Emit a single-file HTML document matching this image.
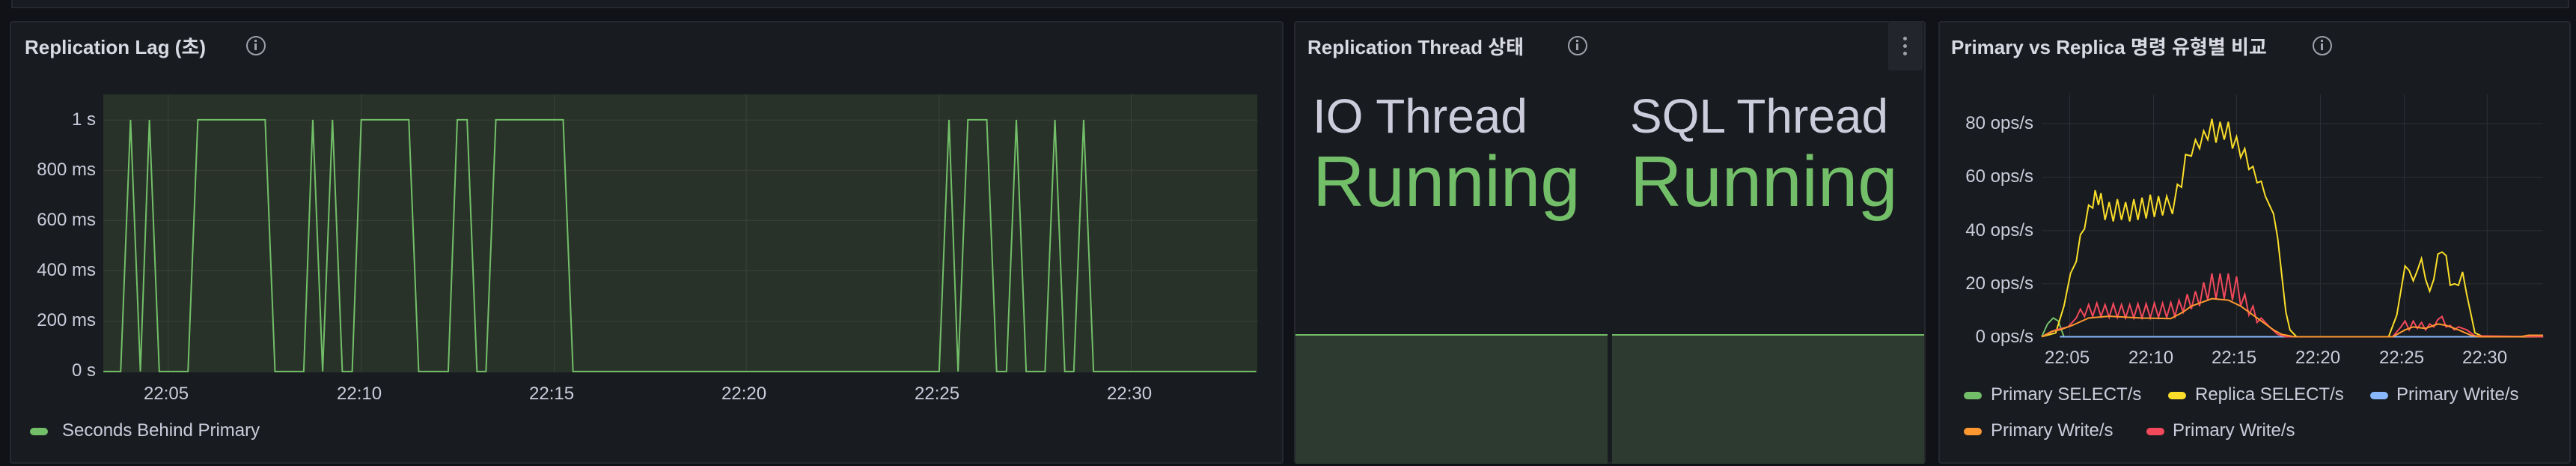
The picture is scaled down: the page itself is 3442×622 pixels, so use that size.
<!DOCTYPE html>
<html><head><meta charset="utf-8"><style>
*{margin:0;padding:0;box-sizing:border-box}
body{width:3442px;height:622px;background:#111217;position:relative;overflow:hidden;font-family:"Liberation Sans","Noto Sans CJK KR",sans-serif;color:#ccccdc}
.abs{position:absolute}
.panel{position:absolute;background:#181b1f;border:2px solid #25282e;border-radius:4px}
.title{position:absolute;font-size:26px;font-weight:bold;color:#d8d9e3;white-space:nowrap}
.info{position:absolute;width:26px;height:26px;border:2.5px solid #9fa0ab;border-radius:50%;}
.info:after{content:"";position:absolute;left:9px;top:8px;width:3px;height:9px;background:#9fa0ab}
.info:before{content:"";position:absolute;left:9px;top:3px;width:3px;height:3px;background:#9fa0ab}
.lbl{position:absolute;font-size:24px;color:#ccccdc;white-space:nowrap}
.r{text-align:right}
.sw{position:absolute;width:24px;height:10px;border-radius:5px}
</style></head><body>
<div class="abs" style="left:15px;top:-4px;width:3418px;height:15px;background:#181b1f;border:2px solid #25282e;border-top:none"></div>

<!-- Panel 1 -->
<div class="panel" style="left:13px;top:28px;width:1702px;height:591px"></div>
<div class="title" style="left:33px;top:43px">Replication Lag (초)</div>
<div class="info" style="left:329px;top:48px"></div>
<div class="abs" style="left:138px;top:126px;width:1542px;height:371px;background:#283228"></div>
<div class="lbl r" style="left:20px;width:108px;top:146px">1 s</div>
<div class="lbl r" style="left:20px;width:108px;top:213px">800 ms</div>
<div class="lbl r" style="left:20px;width:108px;top:280px">600 ms</div>
<div class="lbl r" style="left:20px;width:108px;top:347px">400 ms</div>
<div class="lbl r" style="left:20px;width:108px;top:414px">200 ms</div>
<div class="lbl r" style="left:20px;width:108px;top:481px">0 s</div>
<div class="lbl" style="left:192px;top:512px">22:05</div>
<div class="lbl" style="left:450px;top:512px">22:10</div>
<div class="lbl" style="left:707px;top:512px">22:15</div>
<div class="lbl" style="left:964px;top:512px">22:20</div>
<div class="lbl" style="left:1222px;top:512px">22:25</div>
<div class="lbl" style="left:1479px;top:512px">22:30</div>
<div class="sw" style="left:40px;top:571px;background:#73bf69"></div>
<div class="lbl" style="left:83px;top:561px">Seconds Behind Primary</div>
<svg class="abs" style="left:0;top:0" width="1720" height="622" viewBox="0 0 1568 1568" preserveAspectRatio="none">
<g stroke="#3a4339" stroke-width="1">
<line x1="126" x2="1532" y1="404" y2="404" vector-effect="non-scaling-stroke"/><line x1="126" x2="1532" y1="573" y2="573" vector-effect="non-scaling-stroke"/><line x1="126" x2="1532" y1="742" y2="742" vector-effect="non-scaling-stroke"/><line x1="126" x2="1532" y1="911" y2="911" vector-effect="non-scaling-stroke"/><line x1="126" x2="1532" y1="1081" y2="1081" vector-effect="non-scaling-stroke"/>
<line y1="318" y2="1252" x1="205" x2="205" vector-effect="non-scaling-stroke"/><line y1="318" y2="1252" x1="440" x2="440" vector-effect="non-scaling-stroke"/><line y1="318" y2="1252" x1="675" x2="675" vector-effect="non-scaling-stroke"/><line y1="318" y2="1252" x1="909" x2="909" vector-effect="non-scaling-stroke"/><line y1="318" y2="1252" x1="1144" x2="1144" vector-effect="non-scaling-stroke"/><line y1="318" y2="1252" x1="1378" x2="1378" vector-effect="non-scaling-stroke"/>
</g>
<polyline fill="none" stroke="#73bf69" stroke-width="2" vector-effect="non-scaling-stroke" points="126,1250 147,1250 159,403 171,1250 182,403 194,1250 229,1250 241,403 323,403 335,1250 370,1250 381,403 393,1250 405,403 417,1250 429,1250 440,403 498,403 510,1250 546,1250 557,403 569,403 581,1250 592,1250 604,403 686,403 698,1250 1144,1250 1156,403 1167,1250 1179,403 1202,403 1214,1250 1226,1250 1238,403 1250,1250 1273,1250 1285,403 1297,1250 1308,1250 1320,403 1332,1250 1530,1250"/>
</svg>

<!-- Panel 2 -->
<div class="panel" style="left:1729px;top:28px;width:844px;height:591px"></div>
<div class="abs" style="left:2523px;top:30px;width:46px;height:64px;background:#22252b;border-radius:3px"></div>
<div class="abs" style="left:2543px;top:49px;width:5px;height:5px;border-radius:50%;background:#9fa0ab;box-shadow:0 10px 0 #9fa0ab,0 20px 0 #9fa0ab"></div>
<div class="title" style="left:1747px;top:43px">Replication Thread 상태</div>
<div class="info" style="left:2095px;top:48px"></div>
<div class="abs" style="left:1754px;top:118px;font-size:64px;color:#ccccdc;white-space:nowrap">IO Thread</div>
<div class="abs" style="left:2178px;top:118px;font-size:64px;color:#ccccdc;white-space:nowrap">SQL Thread</div>
<div class="abs" style="left:1754px;top:188px;font-size:96px;color:#73bf69;white-space:nowrap">Running</div>
<div class="abs" style="left:2178px;top:188px;font-size:96px;color:#73bf69;white-space:nowrap">Running</div>
<div class="abs" style="left:1731px;top:446px;width:417px;height:173px;background:#2c3a2f;border-top:2px solid #73bf69"></div>
<div class="abs" style="left:2154px;top:446px;width:417px;height:173px;background:#2c3a2f;border-top:2px solid #73bf69"></div>

<!-- Panel 3 -->
<div class="panel" style="left:2590px;top:28px;width:845px;height:591px"></div>
<div class="title" style="left:2607px;top:43px">Primary vs Replica 명령 유형별 비교</div>
<div class="info" style="left:3090px;top:48px"></div>
<div class="lbl r" style="left:2600px;width:117px;top:151px">80 ops/s</div>
<div class="lbl r" style="left:2600px;width:117px;top:222px">60 ops/s</div>
<div class="lbl r" style="left:2600px;width:117px;top:294px">40 ops/s</div>
<div class="lbl r" style="left:2600px;width:117px;top:365px">20 ops/s</div>
<div class="lbl r" style="left:2600px;width:117px;top:436px">0 ops/s</div>
<div class="lbl" style="left:2732px;top:464px">22:05</div>
<div class="lbl" style="left:2844px;top:464px">22:10</div>
<div class="lbl" style="left:2955px;top:464px">22:15</div>
<div class="lbl" style="left:3067px;top:464px">22:20</div>
<div class="lbl" style="left:3179px;top:464px">22:25</div>
<div class="lbl" style="left:3290px;top:464px">22:30</div>
<svg class="abs" style="left:1720px;top:0" width="1722" height="622" viewBox="0 0 1568 1568" preserveAspectRatio="none">
<g stroke="#2c2f35" stroke-width="1">
<line x1="918" x2="1528" y1="416" y2="416" vector-effect="non-scaling-stroke"/><line x1="918" x2="1528" y1="596" y2="596" vector-effect="non-scaling-stroke"/><line x1="918" x2="1528" y1="776" y2="776" vector-effect="non-scaling-stroke"/><line x1="918" x2="1528" y1="955" y2="955" vector-effect="non-scaling-stroke"/>
<line y1="318" y2="1135" x1="952" x2="952" vector-effect="non-scaling-stroke"/><line y1="318" y2="1135" x1="1054" x2="1054" vector-effect="non-scaling-stroke"/><line y1="318" y2="1135" x1="1155" x2="1155" vector-effect="non-scaling-stroke"/><line y1="318" y2="1135" x1="1257" x2="1257" vector-effect="non-scaling-stroke"/><line y1="318" y2="1135" x1="1359" x2="1359" vector-effect="non-scaling-stroke"/><line y1="318" y2="1135" x1="1460" x2="1460" vector-effect="non-scaling-stroke"/>
</g>
<g fill="none" stroke-width="2">
<polyline stroke="#73bf69" vector-effect="non-scaling-stroke" points="918,1133 925,1090 932,1070 938,1080 945,1133 1528,1133"/>
<polyline stroke="#8ab8ff" vector-effect="non-scaling-stroke" points="940,1133 1528,1133"/>
<polyline stroke="#fade2a" vector-effect="non-scaling-stroke" points="918,1133 935,1120 945,1030 953,920 960,880 965,790 970,770 975,690 980,700 983,640 987,690 990,650 995,740 1000,680 1005,745 1010,670 1015,740 1020,680 1025,745 1030,670 1035,740 1040,665 1045,735 1050,655 1055,730 1060,660 1065,725 1070,660 1077,720 1083,620 1088,630 1093,520 1100,525 1105,470 1110,500 1115,440 1120,470 1125,400 1130,480 1135,410 1140,470 1145,410 1150,500 1155,460 1160,530 1165,500 1170,570 1175,560 1180,615 1185,610 1190,660 1200,720 1205,800 1215,1050 1220,1110 1228,1133 1340,1133 1350,1060 1360,895 1365,910 1370,945 1375,910 1380,870 1385,940 1390,980 1395,940 1400,855 1405,848 1410,860 1415,960 1420,955 1425,960 1430,915 1435,990 1445,1120 1455,1133 1528,1133"/>
<polyline stroke="#f2495c" vector-effect="non-scaling-stroke" points="918,1133 935,1110 950,1100 960,1070 965,1040 970,1065 975,1025 980,1065 985,1020 990,1065 995,1025 1000,1068 1005,1022 1010,1068 1015,1025 1020,1070 1025,1025 1030,1070 1035,1022 1040,1070 1045,1022 1050,1070 1055,1020 1060,1068 1065,1020 1070,1068 1075,1018 1080,1065 1085,1010 1090,1050 1095,990 1100,1040 1105,980 1110,1030 1115,950 1120,1010 1125,920 1130,1005 1135,920 1140,1005 1145,920 1150,1010 1155,930 1160,1030 1165,990 1170,1060 1175,1030 1180,1085 1185,1070 1195,1100 1205,1125 1215,1133 1345,1133 1355,1100 1360,1080 1365,1110 1370,1080 1375,1105 1380,1085 1385,1110 1390,1090 1395,1100 1400,1075 1405,1065 1410,1100 1415,1095 1420,1110 1425,1100 1435,1110 1445,1130 1528,1133"/>
<polyline stroke="#ff9830" vector-effect="non-scaling-stroke" points="918,1133 930,1115 940,1110 955,1095 975,1070 1000,1064 1040,1070 1075,1072 1090,1050 1100,1030 1125,1005 1145,1010 1160,1030 1175,1060 1185,1080 1200,1110 1210,1125 1225,1133 1345,1133 1360,1110 1370,1100 1385,1105 1400,1090 1410,1095 1425,1110 1440,1128 1450,1133 1500,1133 1510,1128 1528,1128"/>
</g>
</svg>
<div class="sw" style="left:2624px;top:523px;background:#73bf69"></div>
<div class="lbl" style="left:2660px;top:513px">Primary SELECT/s</div>
<div class="sw" style="left:2897px;top:523px;background:#fade2a"></div>
<div class="lbl" style="left:2933px;top:513px">Replica SELECT/s</div>
<div class="sw" style="left:3167px;top:523px;background:#8ab8ff"></div>
<div class="lbl" style="left:3202px;top:513px">Primary Write/s</div>
<div class="sw" style="left:2624px;top:571px;background:#ff9830"></div>
<div class="lbl" style="left:2660px;top:561px">Primary Write/s</div>
<div class="sw" style="left:2868px;top:571px;background:#f2495c"></div>
<div class="lbl" style="left:2903px;top:561px">Primary Write/s</div>
</body></html>
